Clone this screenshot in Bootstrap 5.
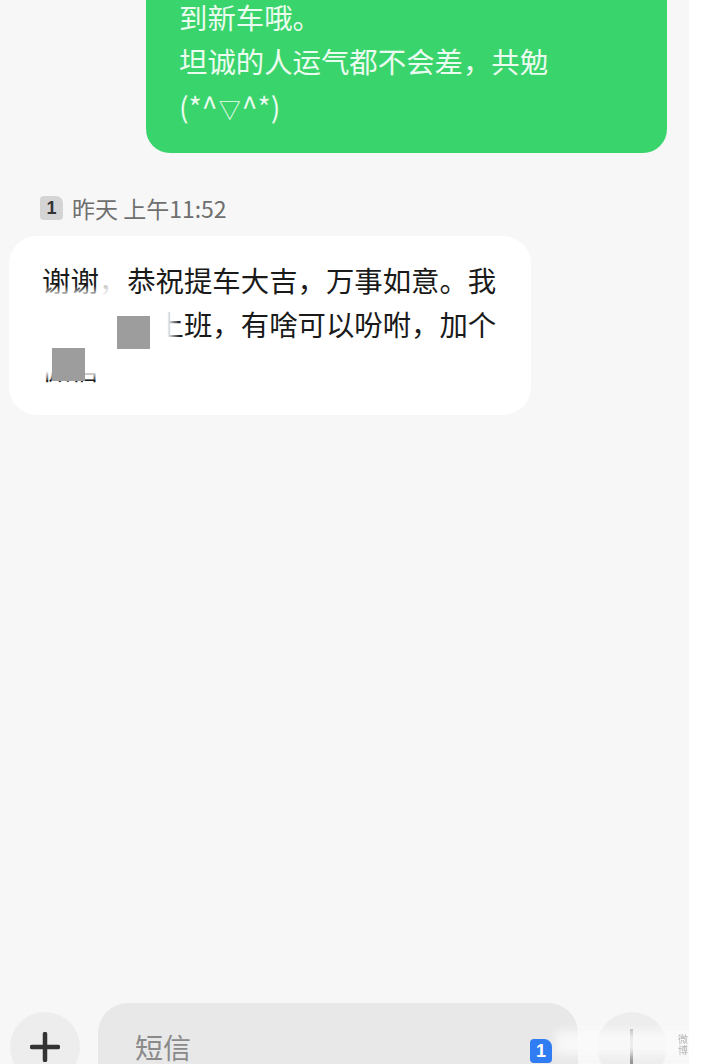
<!DOCTYPE html>
<html lang="zh-CN">
  <head>
    <meta charset="UTF-8" />
    <meta name="viewport" content="width=device-width, initial-scale=1.0" />
    <title>短信</title>
    <link rel="stylesheet" href="https://cdn.jsdelivr.net/npm/bootstrap@5.3.3/dist/css/bootstrap.min.css" />
    <script src="https://cdn.jsdelivr.net/npm/bootstrap@5.3.3/dist/js/bootstrap.bundle.min.js"></script>
    <style>
      html, body {
        height: 1064px;
        overflow: hidden;
        background: #fff;
        font-family: "Noto Sans CJK SC", "Noto Sans", sans-serif;
      }
      .chat-screen {
        position: relative;
        width: 689px;
        height: 1064px;
        overflow: hidden;
        background: #f7f7f7;
      }
      .bubble-line { height: 44.5px; line-height: 44.5px; white-space: nowrap; }
      .bubble-out {
        width: 521px;
        margin: -50px 0 0 146px;
        padding: 0 33px 25px;
        background: #39d46b;
        border-radius: 0 0 24px 24px;
        color: #eafbef;
        font-size: 28.4px;
      }
      .face-mark { font-size: 22px; margin: 0 1px; }
      .msg-time {
        margin: 38px 0 0 40px;
        height: 34px;
        color: #6f6f6f;
        font-size: 23px;
        line-height: 34px;
        gap: 9px;
      }
      .sim-tag {
        width: 23px;
        height: 24px;
        border-radius: 4px 7px 4px 4px;
        background: #d4d4d4;
        color: #333;
        font: 700 18px/24px "Liberation Sans", sans-serif;
        text-align: center;
      }
      .bubble-in {
        position: relative;
        width: 522px;
        height: 179px;
        margin: 11px 0 0 9px;
        padding: 22px 33px 0;
        background: #fff;
        border-radius: 28px;
        color: #1a1a1a;
        font-size: 28.4px;
      }
      .bubble-in .bubble-line { height: 44px; line-height: 44px; }
      .censor-block { position: absolute; width: 33px; height: 33px; background: #9d9d9d; }
      .censor-a { left: 108px; top: 80px; }
      .censor-b { left: 43px; top: 112px; }
      .wipe { position: absolute; background: #fff; }
      .wipe-line2 { left: 10px; top: 66px; width: 161px; height: 46px; background: linear-gradient(90deg, #fff 148px, rgba(255, 255, 255, 0)); }
      .wipe-line3 { left: 20px; top: 108px; width: 80px; height: 36px; background: linear-gradient(#fff 75%, rgba(255, 255, 255, 0.2)); }
      .wipe-line1 { left: 34px; top: 50px; width: 70px; height: 16px; background: linear-gradient(rgba(255, 255, 255, 0), #fff 70%); }
      .wipe-comma { left: 90px; top: 30px; width: 28px; height: 36px; background: linear-gradient(90deg, rgba(255, 255, 255, 0.7), #fff); }
      .composer { position: absolute; left: 0; right: 0; top: 1003px; padding-left: 10px; }
      .round-btn {
        flex: none;
        width: 70px;
        height: 70px;
        margin-top: 9px;
        border-radius: 50%;
        background: #ededed;
      }
      .input-box {
        width: 480px;
        height: 90px;
        margin: 0 19px 0 18px;
        padding: 28px 0 0 37px;
        background: #e8e8e8;
        border-radius: 30px;
        color: #8a8a8a;
        font-size: 28px;
        line-height: 32px;
      }
      .sim-blue {
        position: absolute;
        left: 530px;
        top: 36px;
        width: 22px;
        height: 24px;
        border-radius: 4px 8px 4px 4px;
        background: #2f7cf3;
        color: #fff;
        font: 700 18px/24px "Liberation Sans", sans-serif;
        text-align: center;
      }
      .smear {
        position: absolute;
        left: 556px;
        top: 28px;
        width: 146px;
        height: 24px;
        background: #fbfbfb;
        filter: blur(5px);
        opacity: 0.85;
      }
      .send-mark {
        position: absolute;
        left: 630px;
        top: 26px;
        width: 3px;
        height: 40px;
        background: linear-gradient(rgba(140, 140, 140, 0.7), #8c8c8c);
      }
      .wm-text {
        position: absolute;
        left: 678px;
        top: 30px;
        width: 11px;
        color: #b5b5b5;
        font-size: 10px;
        line-height: 11px;
        filter: blur(0.6px);
      }
    </style>
  </head>
  <body>
    <main class="chat-screen">
      <div class="bubble-out">
        <div class="bubble-line">　</div>
        <div class="bubble-line">到新车哦。</div>
        <div class="bubble-line">坦诚的人运气都不会差，共勉</div>
        <div class="bubble-line">(*^<span class="face-mark">▽</span>^*)</div>
      </div>

      <div class="msg-time d-flex align-items-center">
        <span class="sim-tag">1</span>
        <span>昨天 上午11:52</span>
      </div>

      <div class="bubble-in">
        <div class="bubble-line">谢谢，恭祝提车大吉，万事如意。我</div>
        <div class="bubble-line">　　　　上班，有啥可以吩咐，加个</div>
        <div class="bubble-line">微信</div>
        <div class="wipe wipe-line1"></div>
        <div class="wipe wipe-comma"></div>
        <div class="wipe wipe-line2"></div>
        <div class="wipe wipe-line3"></div>
        <div class="censor-block censor-a"></div>
        <div class="censor-block censor-b"></div>
      </div>

      <div class="composer d-flex align-items-start">
        <div class="round-btn d-flex align-items-center justify-content-center">
          <svg width="30" height="30" viewBox="0 0 30 30" aria-hidden="true">
            <path d="M15 2v26M2 15h26" stroke="#333" stroke-width="4.5" stroke-linecap="round" fill="none" />
          </svg>
        </div>
        <div class="input-box">短信</div>
        <div class="round-btn"></div>
        <span class="send-mark"></span>
        <div class="smear"></div>
        <span class="sim-blue">1</span>
        <span class="wm-text">微博</span>
      </div>
    </main>
  </body>
</html>
